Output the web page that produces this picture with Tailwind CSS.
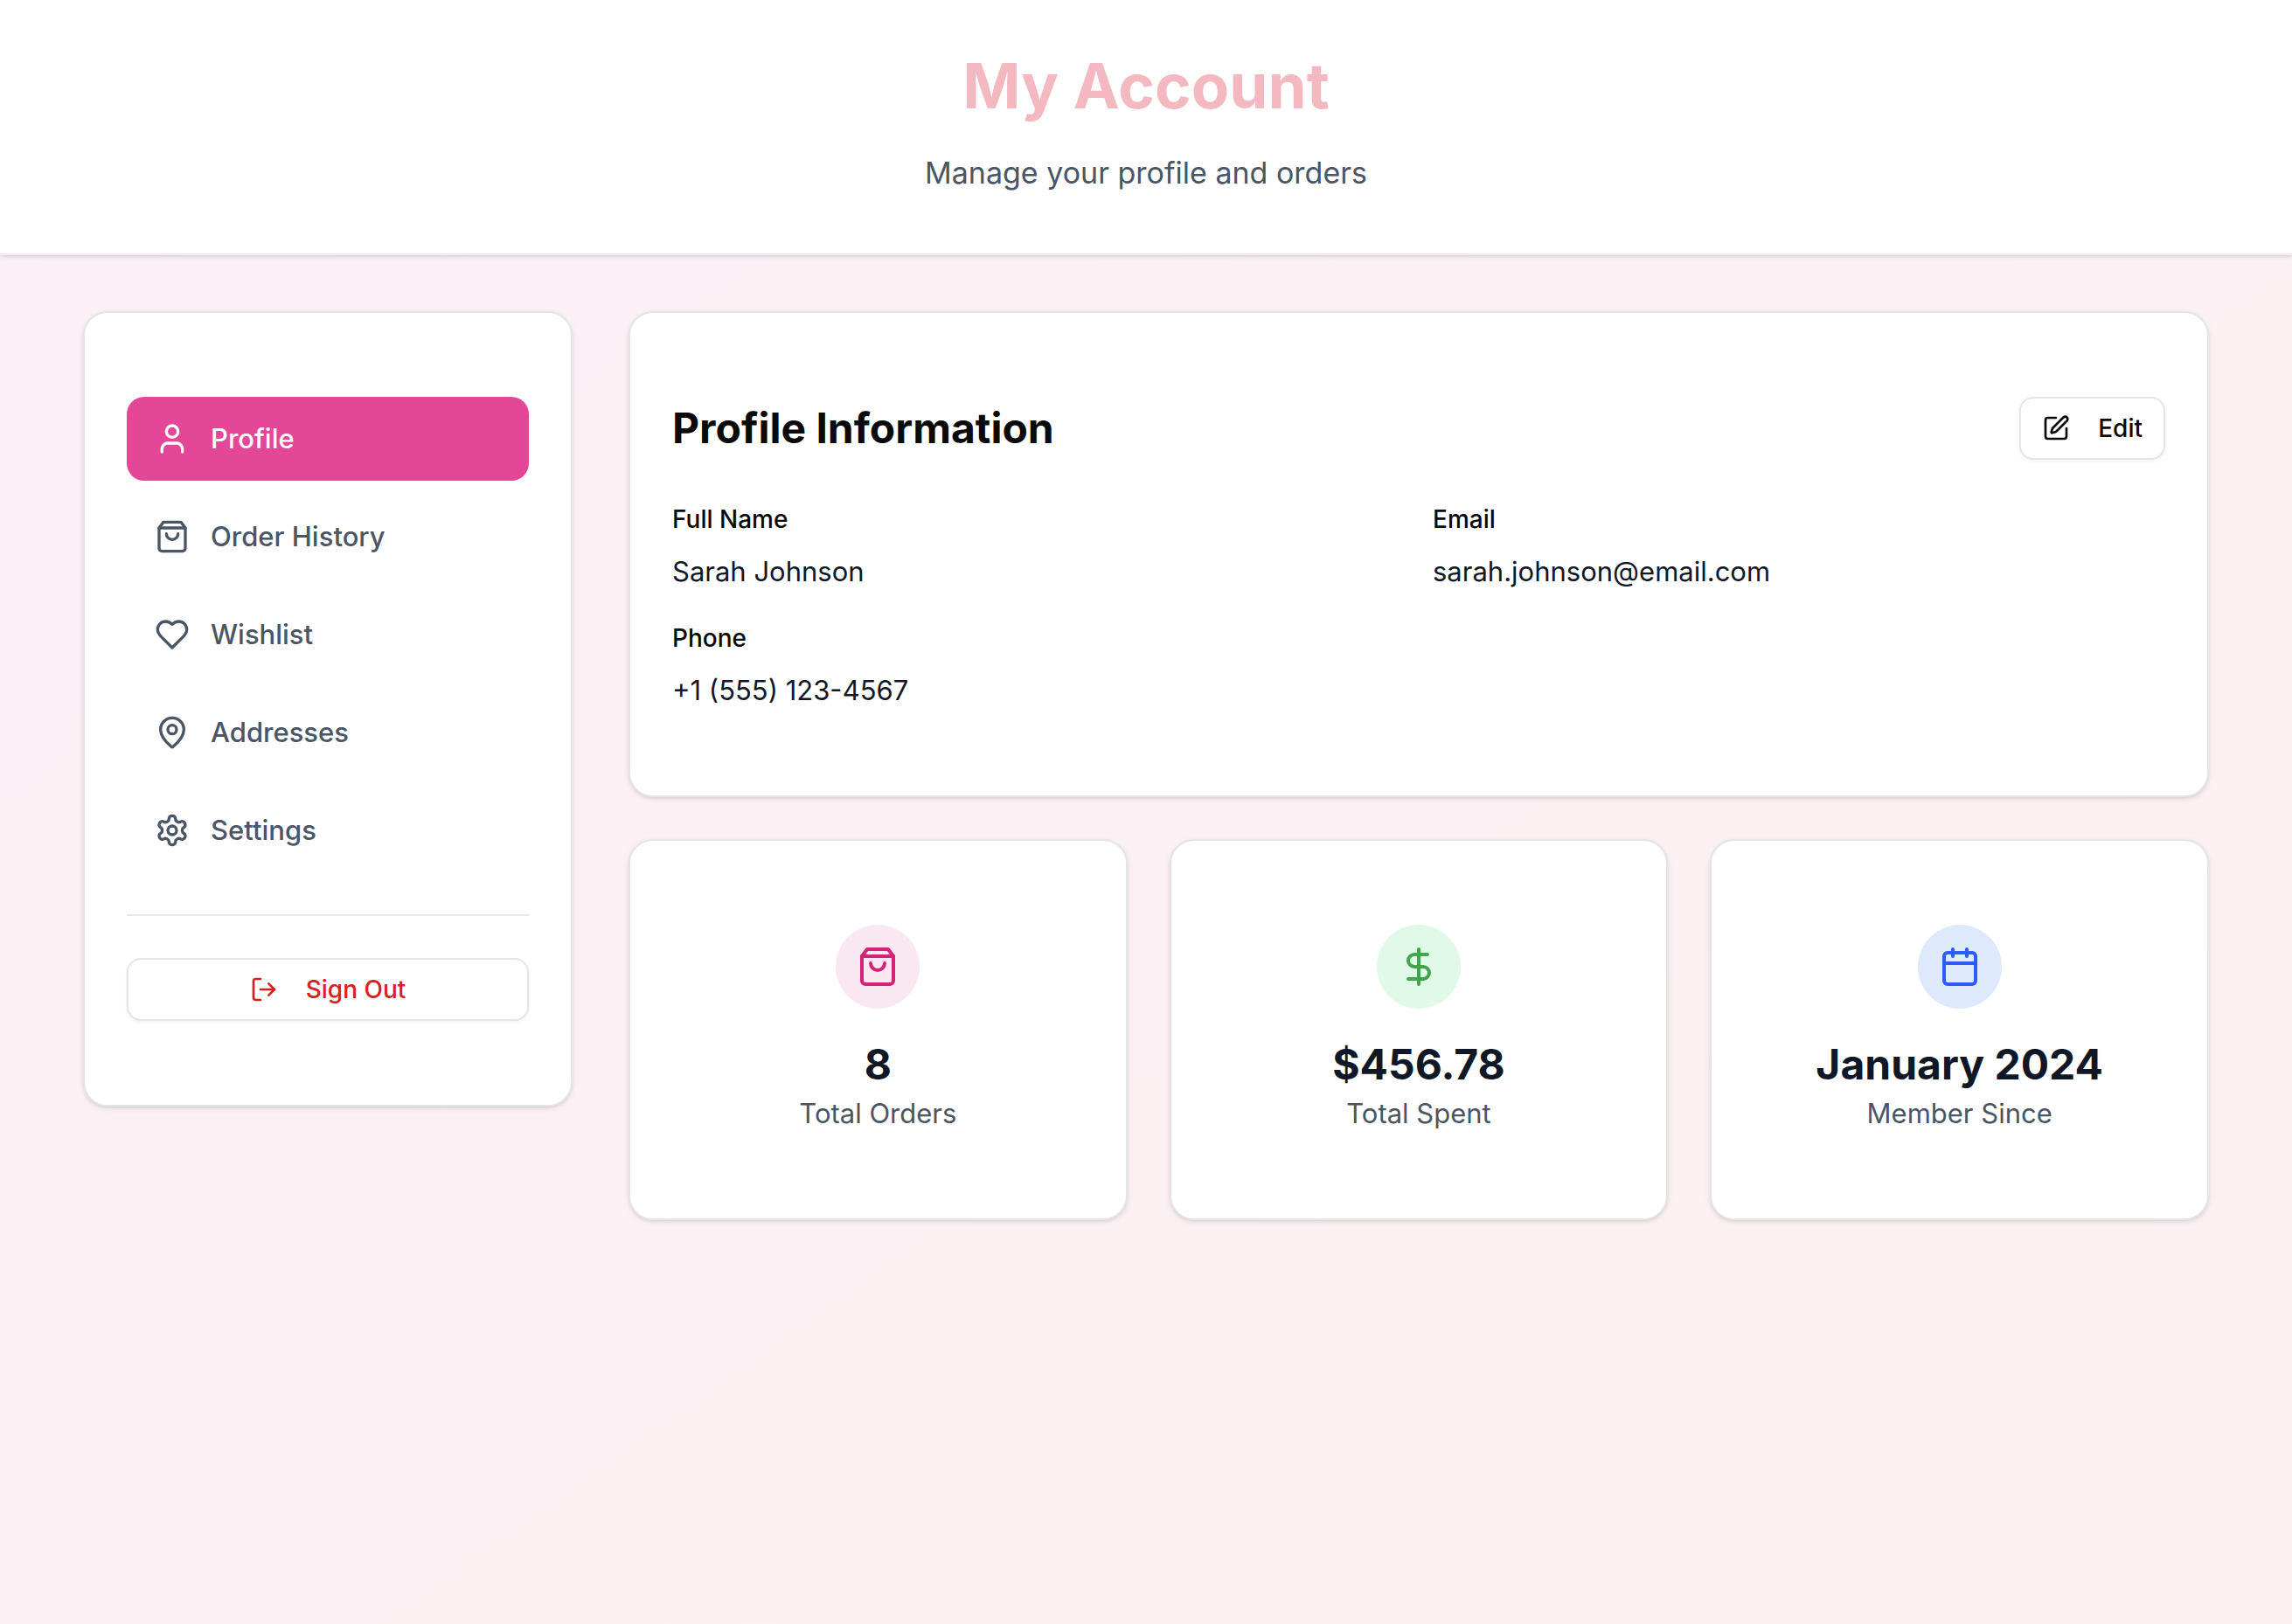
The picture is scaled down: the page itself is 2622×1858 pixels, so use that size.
<!DOCTYPE html>
<html lang="en">
<head>
<meta charset="utf-8">
<meta name="viewport" content="width=device-width, initial-scale=1">
<title>My Account</title>
<script src="https://cdn.jsdelivr.net/npm/@tailwindcss/browser@4"></script>
</head>
<body class="min-h-screen bg-linear-to-br from-[#fbf0f6] to-[#fcf1f1] font-['Inter',sans-serif] text-[31px] leading-[48px] text-[#0a0a0a]">
<header class="flex flex-col items-center gap-8 border-b-2 border-[#f9e7f1] bg-white pt-[58px] pb-16 text-center shadow-[0_2px_6px_rgba(0,0,0,0.1),0_2px_4px_-2px_rgba(0,0,0,0.1)]">
  <h1 class="text-[71px] leading-[80px] font-bold text-[#f4b8c1]">My Account</h1>
  <p class="text-[34px] leading-[56px] text-[#4a5565]">Manage your profile and orders</p>
</header>
<main class="mx-auto grid max-w-[2560px] grid-cols-4 items-start gap-16 px-16 py-16">
  <aside class="rounded-[28px] border-2 border-[#e5e5e5] bg-white px-12 py-24 shadow-[0_2px_6px_rgba(0,0,0,0.1),0_2px_4px_-2px_rgba(0,0,0,0.1)]">
    <nav class="flex flex-col gap-4 font-medium text-[#4a5565]" aria-label="Account">
      <button type="button" aria-current="page" class="flex h-24 items-center gap-6 rounded-[20px] bg-[#e44798] px-8 text-white">
        <svg class="size-10 shrink-0" viewBox="0 0 24 24" fill="none" stroke="currentColor" stroke-width="2" stroke-linecap="round" stroke-linejoin="round" aria-hidden="true"><path d="M19 21v-2a4 4 0 0 0-4-4H9a4 4 0 0 0-4 4v2"/><circle cx="12" cy="7" r="4"/></svg>
        <span>Profile</span>
      </button>
      <button type="button" class="flex h-24 items-center gap-6 rounded-[20px] px-8">
        <svg class="size-10 shrink-0" viewBox="0 0 24 24" fill="none" stroke="currentColor" stroke-width="2" stroke-linecap="round" stroke-linejoin="round" aria-hidden="true"><path d="M6 2 3 6v14a2 2 0 0 0 2 2h14a2 2 0 0 0 2-2V6l-3-4Z"/><path d="M3 6h18"/><path d="M16 10a4 4 0 0 1-8 0"/></svg>
        <span>Order History</span>
      </button>
      <button type="button" class="flex h-24 items-center gap-6 rounded-[20px] px-8">
        <svg class="size-10 shrink-0" viewBox="0 0 24 24" fill="none" stroke="currentColor" stroke-width="2" stroke-linecap="round" stroke-linejoin="round" aria-hidden="true"><path d="M19 14c1.49-1.46 3-3.21 3-5.5A5.5 5.5 0 0 0 16.5 3c-1.76 0-3 .5-4.5 2-1.5-1.5-2.74-2-4.5-2A5.5 5.5 0 0 0 2 8.5c0 2.3 1.5 4.05 3 5.5l7 7Z"/></svg>
        <span>Wishlist</span>
      </button>
      <button type="button" class="flex h-24 items-center gap-6 rounded-[20px] px-8">
        <svg class="size-10 shrink-0" viewBox="0 0 24 24" fill="none" stroke="currentColor" stroke-width="2" stroke-linecap="round" stroke-linejoin="round" aria-hidden="true"><path d="M20 10c0 4.993-5.539 10.193-7.399 11.799a1 1 0 0 1-1.202 0C9.539 20.193 4 14.993 4 10a8 8 0 0 1 16 0"/><circle cx="12" cy="10" r="3"/></svg>
        <span>Addresses</span>
      </button>
      <button type="button" class="flex h-24 items-center gap-6 rounded-[20px] px-8">
        <svg class="size-10 shrink-0" viewBox="0 0 24 24" fill="none" stroke="currentColor" stroke-width="2" stroke-linecap="round" stroke-linejoin="round" aria-hidden="true"><path d="M12.22 2h-.44a2 2 0 0 0-2 2v.18a2 2 0 0 1-1 1.73l-.43.25a2 2 0 0 1-2 0l-.15-.08a2 2 0 0 0-2.73.73l-.22.38a2 2 0 0 0 .73 2.73l.15.1a2 2 0 0 1 1 1.72v.51a2 2 0 0 1-1 1.74l-.15.09a2 2 0 0 0-.73 2.73l.22.38a2 2 0 0 0 2.73.73l.15-.08a2 2 0 0 1 2 0l.43.25a2 2 0 0 1 1 1.73V20a2 2 0 0 0 2 2h.44a2 2 0 0 0 2-2v-.18a2 2 0 0 1 1-1.73l.43-.25a2 2 0 0 1 2 0l.15.08a2 2 0 0 0 2.73-.73l.22-.39a2 2 0 0 0-.73-2.73l-.15-.08a2 2 0 0 1-1-1.74v-.5a2 2 0 0 1 1-1.74l.15-.09a2 2 0 0 0 .73-2.73l-.22-.38a2 2 0 0 0-2.73-.73l-.15.08a2 2 0 0 1-2 0l-.43-.25a2 2 0 0 1-1-1.73V4a2 2 0 0 0-2-2z"/><circle cx="12" cy="12" r="3"/></svg>
        <span>Settings</span>
      </button>
    </nav>
    <div class="mt-12 border-t-2 border-[#e5e7eb] pt-12">
      <button type="button" class="flex h-[72px] w-full items-center justify-center gap-8 rounded-2xl border-2 border-[#e5e5e5] bg-white text-[28px] leading-10 font-medium text-[#d9201f] shadow-[0_2px_4px_rgba(0,0,0,0.05)]">
        <svg class="size-8 shrink-0" viewBox="0 0 24 24" fill="none" stroke="currentColor" stroke-width="2" stroke-linecap="round" stroke-linejoin="round" aria-hidden="true"><path d="M9 21H5a2 2 0 0 1-2-2V5a2 2 0 0 1 2-2h4"/><path d="m16 17 5-5-5-5"/><path d="M21 12H9"/></svg>
        <span>Sign Out</span>
      </button>
    </div>
  </aside>

  <div class="col-span-3 flex flex-col gap-12">
    <section class="rounded-[28px] border-2 border-[#e5e5e5] bg-white px-12 py-24 shadow-[0_2px_6px_rgba(0,0,0,0.1),0_2px_4px_-2px_rgba(0,0,0,0.1)]">
      <div class="mb-12 flex items-center justify-between">
        <h2 class="text-5xl leading-[64px] font-bold">Profile Information</h2>
        <button type="button" class="flex h-[72px] items-center gap-8 rounded-2xl border-2 border-[#e5e5e5] bg-white px-6 text-[28px] leading-10 font-medium shadow-[0_2px_4px_rgba(0,0,0,0.05)]">
          <svg class="size-8 shrink-0" viewBox="0 0 24 24" fill="none" stroke="currentColor" stroke-width="2" stroke-linecap="round" stroke-linejoin="round" aria-hidden="true"><path d="M12 3H5a2 2 0 0 0-2 2v14a2 2 0 0 0 2 2h14a2 2 0 0 0 2-2v-7"/><path d="M18.375 2.625a1 1 0 0 1 3 3l-9.013 9.014a2 2 0 0 1-.853.505l-2.873.84a.5.5 0 0 1-.62-.62l.84-2.873a2 2 0 0 1 .506-.852z"/></svg>
          <span>Edit</span>
        </button>
      </div>
      <dl class="grid grid-cols-2 gap-8">
        <div class="flex flex-col gap-4">
          <dt class="text-[28px] leading-10 font-medium">Full Name</dt>
          <dd class="text-[#101828]">Sarah Johnson</dd>
        </div>
        <div class="flex flex-col gap-4">
          <dt class="text-[28px] leading-10 font-medium">Email</dt>
          <dd class="text-[#101828]">sarah.johnson@email.com</dd>
        </div>
        <div class="flex flex-col gap-4">
          <dt class="text-[28px] leading-10 font-medium">Phone</dt>
          <dd class="text-[#101828]">+1 (555) 123-4567</dd>
        </div>
      </dl>
    </section>

    <section class="grid grid-cols-3 gap-12 text-center" aria-label="Account summary">
      <div class="flex flex-col items-center rounded-[28px] border-2 border-[#e5e5e5] bg-white px-12 py-24 shadow-[0_2px_6px_rgba(0,0,0,0.1),0_2px_4px_-2px_rgba(0,0,0,0.1)]">
        <div class="mb-8 flex size-24 items-center justify-center rounded-full bg-[#f9e7f2] text-[#d62277]">
          <svg class="size-12" viewBox="0 0 24 24" fill="none" stroke="currentColor" stroke-width="2" stroke-linecap="round" stroke-linejoin="round" aria-hidden="true"><path d="M6 2 3 6v14a2 2 0 0 0 2 2h14a2 2 0 0 0 2-2V6l-3-4Z"/><path d="M3 6h18"/><path d="M16 10a4 4 0 0 1-8 0"/></svg>
        </div>
        <h3 class="text-5xl leading-[64px] font-bold text-[#101828]">8</h3>
        <p class="text-[#4a5565]">Total Orders</p>
      </div>
      <div class="flex flex-col items-center rounded-[28px] border-2 border-[#e5e5e5] bg-white px-12 py-24 shadow-[0_2px_6px_rgba(0,0,0,0.1),0_2px_4px_-2px_rgba(0,0,0,0.1)]">
        <div class="mb-8 flex size-24 items-center justify-center rounded-full bg-[#e1fae8] text-[#40a64b]">
          <svg class="size-12" viewBox="0 0 24 24" fill="none" stroke="currentColor" stroke-width="2" stroke-linecap="round" stroke-linejoin="round" aria-hidden="true"><path d="M12 2v20"/><path d="M17 5H9.5a3.5 3.5 0 0 0 0 7h5a3.5 3.5 0 0 1 0 7H6"/></svg>
        </div>
        <h3 class="text-5xl leading-[64px] font-bold text-[#101828]">$456.78</h3>
        <p class="text-[#4a5565]">Total Spent</p>
      </div>
      <div class="flex flex-col items-center rounded-[28px] border-2 border-[#e5e5e5] bg-white px-12 py-24 shadow-[0_2px_6px_rgba(0,0,0,0.1),0_2px_4px_-2px_rgba(0,0,0,0.1)]">
        <div class="mb-8 flex size-24 items-center justify-center rounded-full bg-[#dee9fc] text-[#2b5df6]">
          <svg class="size-12" viewBox="0 0 24 24" fill="none" stroke="currentColor" stroke-width="2" stroke-linecap="round" stroke-linejoin="round" aria-hidden="true"><path d="M8 2v4"/><path d="M16 2v4"/><rect width="18" height="18" x="3" y="4" rx="2"/><path d="M3 10h18"/></svg>
        </div>
        <h3 class="text-5xl leading-[64px] font-bold text-[#101828]">January 2024</h3>
        <p class="text-[#4a5565]">Member Since</p>
      </div>
    </section>
  </div>
</main>
</body>
</html>
